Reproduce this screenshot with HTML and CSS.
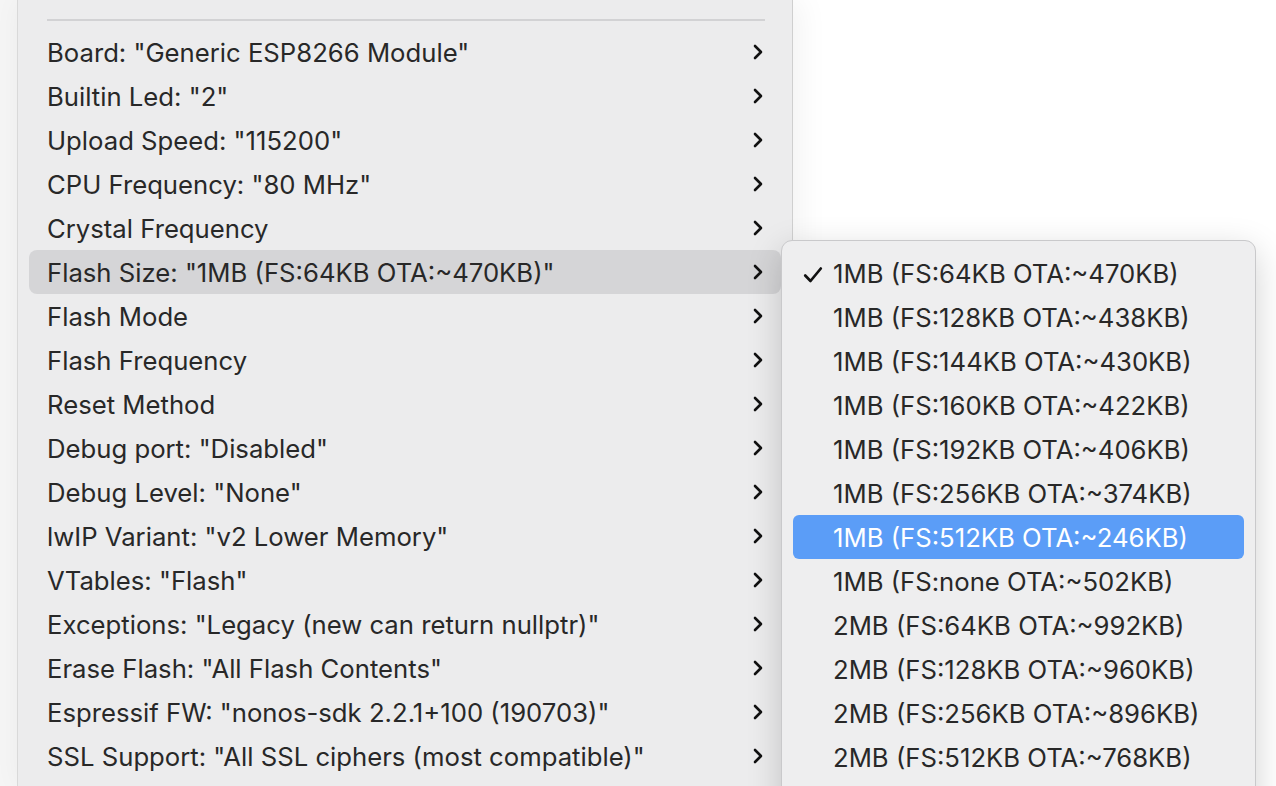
FILE: index.html
```html
<!DOCTYPE html>
<html>
<head>
<meta charset="utf-8">
<link rel="stylesheet" href="styles.css">
</head>
<body>
<div class="page">
  <div class="strip"></div>
  <div class="menu">
    <div class="sep"></div>
    <ul class="items">
      <li class="item"><span>Board: "Generic ESP8266 Module"</span><svg class="chev" viewBox="0 0 10 16"><path d="M2 2 L8 8 L2 14"/></svg></li>
      <li class="item"><span>Builtin Led: "2"</span><svg class="chev" viewBox="0 0 10 16"><path d="M2 2 L8 8 L2 14"/></svg></li>
      <li class="item"><span>Upload Speed: "115200"</span><svg class="chev" viewBox="0 0 10 16"><path d="M2 2 L8 8 L2 14"/></svg></li>
      <li class="item"><span>CPU Frequency: "80 MHz"</span><svg class="chev" viewBox="0 0 10 16"><path d="M2 2 L8 8 L2 14"/></svg></li>
      <li class="item"><span>Crystal Frequency</span><svg class="chev" viewBox="0 0 10 16"><path d="M2 2 L8 8 L2 14"/></svg></li>
      <li class="item active"><span>Flash Size: "1MB (FS:64KB OTA:~470KB)"</span><svg class="chev" viewBox="0 0 10 16"><path d="M2 2 L8 8 L2 14"/></svg></li>
      <li class="item"><span>Flash Mode</span><svg class="chev" viewBox="0 0 10 16"><path d="M2 2 L8 8 L2 14"/></svg></li>
      <li class="item"><span>Flash Frequency</span><svg class="chev" viewBox="0 0 10 16"><path d="M2 2 L8 8 L2 14"/></svg></li>
      <li class="item"><span>Reset Method</span><svg class="chev" viewBox="0 0 10 16"><path d="M2 2 L8 8 L2 14"/></svg></li>
      <li class="item"><span>Debug port: "Disabled"</span><svg class="chev" viewBox="0 0 10 16"><path d="M2 2 L8 8 L2 14"/></svg></li>
      <li class="item"><span>Debug Level: "None"</span><svg class="chev" viewBox="0 0 10 16"><path d="M2 2 L8 8 L2 14"/></svg></li>
      <li class="item"><span>lwIP Variant: "v2 Lower Memory"</span><svg class="chev" viewBox="0 0 10 16"><path d="M2 2 L8 8 L2 14"/></svg></li>
      <li class="item"><span>VTables: "Flash"</span><svg class="chev" viewBox="0 0 10 16"><path d="M2 2 L8 8 L2 14"/></svg></li>
      <li class="item"><span>Exceptions: "Legacy (new can return nullptr)"</span><svg class="chev" viewBox="0 0 10 16"><path d="M2 2 L8 8 L2 14"/></svg></li>
      <li class="item"><span>Erase Flash: "All Flash Contents"</span><svg class="chev" viewBox="0 0 10 16"><path d="M2 2 L8 8 L2 14"/></svg></li>
      <li class="item"><span>Espressif FW: "nonos-sdk 2.2.1+100 (190703)"</span><svg class="chev" viewBox="0 0 10 16"><path d="M2 2 L8 8 L2 14"/></svg></li>
      <li class="item"><span>SSL Support: "All SSL ciphers (most compatible)"</span><svg class="chev" viewBox="0 0 10 16"><path d="M2 2 L8 8 L2 14"/></svg></li>
    </ul>
  </div>
  <div class="submenu">
    <ul class="items">
      <li class="sub checked"><svg class="check" viewBox="0 0 20 18"><path d="M2.2 9.5 L7.5 15 L17.8 2.5"/></svg><span>1MB (FS:64KB OTA:~470KB)</span></li>
      <li class="sub"><span>1MB (FS:128KB OTA:~438KB)</span></li>
      <li class="sub"><span>1MB (FS:144KB OTA:~430KB)</span></li>
      <li class="sub"><span>1MB (FS:160KB OTA:~422KB)</span></li>
      <li class="sub"><span>1MB (FS:192KB OTA:~406KB)</span></li>
      <li class="sub"><span>1MB (FS:256KB OTA:~374KB)</span></li>
      <li class="sub hover"><span>1MB (FS:512KB OTA:~246KB)</span></li>
      <li class="sub"><span>1MB (FS:none OTA:~502KB)</span></li>
      <li class="sub"><span>2MB (FS:64KB OTA:~992KB)</span></li>
      <li class="sub"><span>2MB (FS:128KB OTA:~960KB)</span></li>
      <li class="sub"><span>2MB (FS:256KB OTA:~896KB)</span></li>
      <li class="sub"><span>2MB (FS:512KB OTA:~768KB)</span></li>
    </ul>
  </div>
</div>
</body>
</html>
```

FILE: styles.css
```css
html, body {
  margin: 0;
  padding: 0;
  background: #ffffff;
  overflow: hidden;
  height: 786px;
}

.page {
  position: relative;
  display: flex;
  height: 786px;
  overflow: hidden;
  font-family: "Inter", "Liberation Sans", sans-serif;
  font-size: 25.7px;
  color: #282828;
}

.strip {
  width: 17px;
  flex: none;
  background: #f5f5f5;
}

.menu {
  width: 776px;
  flex: none;
  box-sizing: border-box;
  background: #ececed;
  border-left: 1px solid #d9d9d9;
  border-right: 1px solid #cfcfcf;
  box-shadow: 6px 0 30px rgba(0, 0, 0, 0.06);
  padding: 19px 11px 0 11px;
  position: relative;
  z-index: 1;
}

.sep {
  height: 2px;
  background: #d2d2d4;
  margin: 0 16px 9px 18px;
}

.items {
  list-style: none;
  margin: 0;
  padding: 0;
}

.item {
  height: 44px;
  display: flex;
  align-items: center;
  justify-content: space-between;
  padding: 0 18px 0 18px;
  border-radius: 8px;
  white-space: nowrap;
}

.item.active {
  background: #d5d5d7;
}

.chev {
  width: 10px;
  height: 16px;
  flex: none;
}

.chev path {
  fill: none;
  stroke: #111;
  stroke-width: 2.6;
  stroke-linecap: round;
  stroke-linejoin: round;
}

.submenu {
  position: absolute;
  left: 781px;
  top: 240px;
  width: 451px;
  height: 600px;
  padding: 10px 11px;
  background: #eeeeef;
  border: 1px solid #c9c9cb;
  border-radius: 11px;
  box-shadow: 0 10px 34px rgba(0, 0, 0, 0.18);
  z-index: 2;
}

.sub {
  position: relative;
  height: 44px;
  display: flex;
  align-items: center;
  padding-left: 40px;
  border-radius: 6px;
  white-space: nowrap;
}

.sub.hover {
  background: #5b9df7;
  color: #ffffff;
}

.check {
  position: absolute;
  left: 10px;
  top: 15px;
  width: 20px;
  height: 18px;
}

.check path {
  fill: none;
  stroke: #111;
  stroke-width: 2.7;
  stroke-linecap: round;
  stroke-linejoin: round;
}
```
